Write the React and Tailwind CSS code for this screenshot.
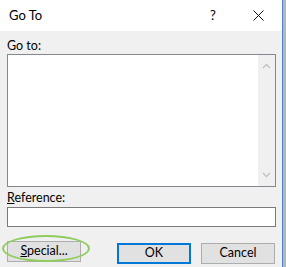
import React from 'react';

const font = { fontFamily: 'Lato, "Noto Sans", sans-serif' };

const Chevron = ({ up }) => (
  <svg width="9" height="6" viewBox="0 0 9 6" className="block">
    <path
      d={up ? 'M1 5 L4.5 1.5 L8 5' : 'M1 1 L4.5 4.5 L8 1'}
      fill="none"
      stroke="#c2c2c2"
      strokeWidth="1.3"
    />
  </svg>
);

const Button = ({ children, primary }) => (
  <button
    className={
      primary
        ? 'w-[74px] h-[21px] bg-[#e1e1e1] border-2 border-[#0078d7] text-[12.5px] text-black leading-none'
        : 'w-[74px] h-[21px] bg-[#e1e1e1] border border-[#adadad] text-[12.5px] text-black leading-none'
    }
  >
    {children}
  </button>
);

export default function App() {
  return (
    <div className="w-[286px] h-[267px] flex bg-[#aeb9c8] overflow-hidden" style={font}>
      <div className="w-[283px] h-full flex flex-col border-r border-[#5a7fc0]">
        {/* title bar */}
        <div className="h-[31px] bg-white flex items-center pl-[9px] shrink-0">
          <span className="text-[13px] text-black">Go To</span>
          <span className="ml-auto text-[13px] text-black w-[10px] text-center mr-[35px]">?</span>
          <svg width="11" height="11" viewBox="0 0 11 11" className="mr-[18px]">
            <path d="M0.5 0.5 L10.5 10.5 M10.5 0.5 L0.5 10.5" stroke="#111" strokeWidth="1" />
          </svg>
        </div>

        {/* body */}
        <div className="flex-1 bg-[#f0f0f0] pl-[7px] pr-[6px] pt-[8px] relative">
          <div className="text-[12.5px] leading-[14px] text-black">Go to:</div>
          <div className="mt-[1px] h-[133px] border border-[#828790] bg-white flex">
            <div className="flex-1" />
            <div className="w-[17px] bg-[#f0f0f0] flex flex-col items-center justify-between py-[8px]">
              <Chevron up />
              <Chevron />
            </div>
          </div>

          <div className="mt-[4px] text-[12.5px] leading-[14px] text-black">
            <span className="underline">R</span>eference:
          </div>
          <div className="mt-[2px] h-[20px] border border-[#7a7a7a] bg-white" />

          <div className="mt-[12px] flex items-center">
            <Button>
              <span className="underline">S</span>pecial...
            </Button>
            <div className="ml-[36px]">
              <Button primary>OK</Button>
            </div>
            <div className="ml-[10px]">
              <Button>Cancel</Button>
            </div>
          </div>

          {/* highlight ring */}
          <div className="absolute left-[2px] top-[204px] w-[88px] h-[27px] rounded-[50%] border-2 border-[#8fcd5e]" />
        </div>
      </div>
    </div>
  );
}
